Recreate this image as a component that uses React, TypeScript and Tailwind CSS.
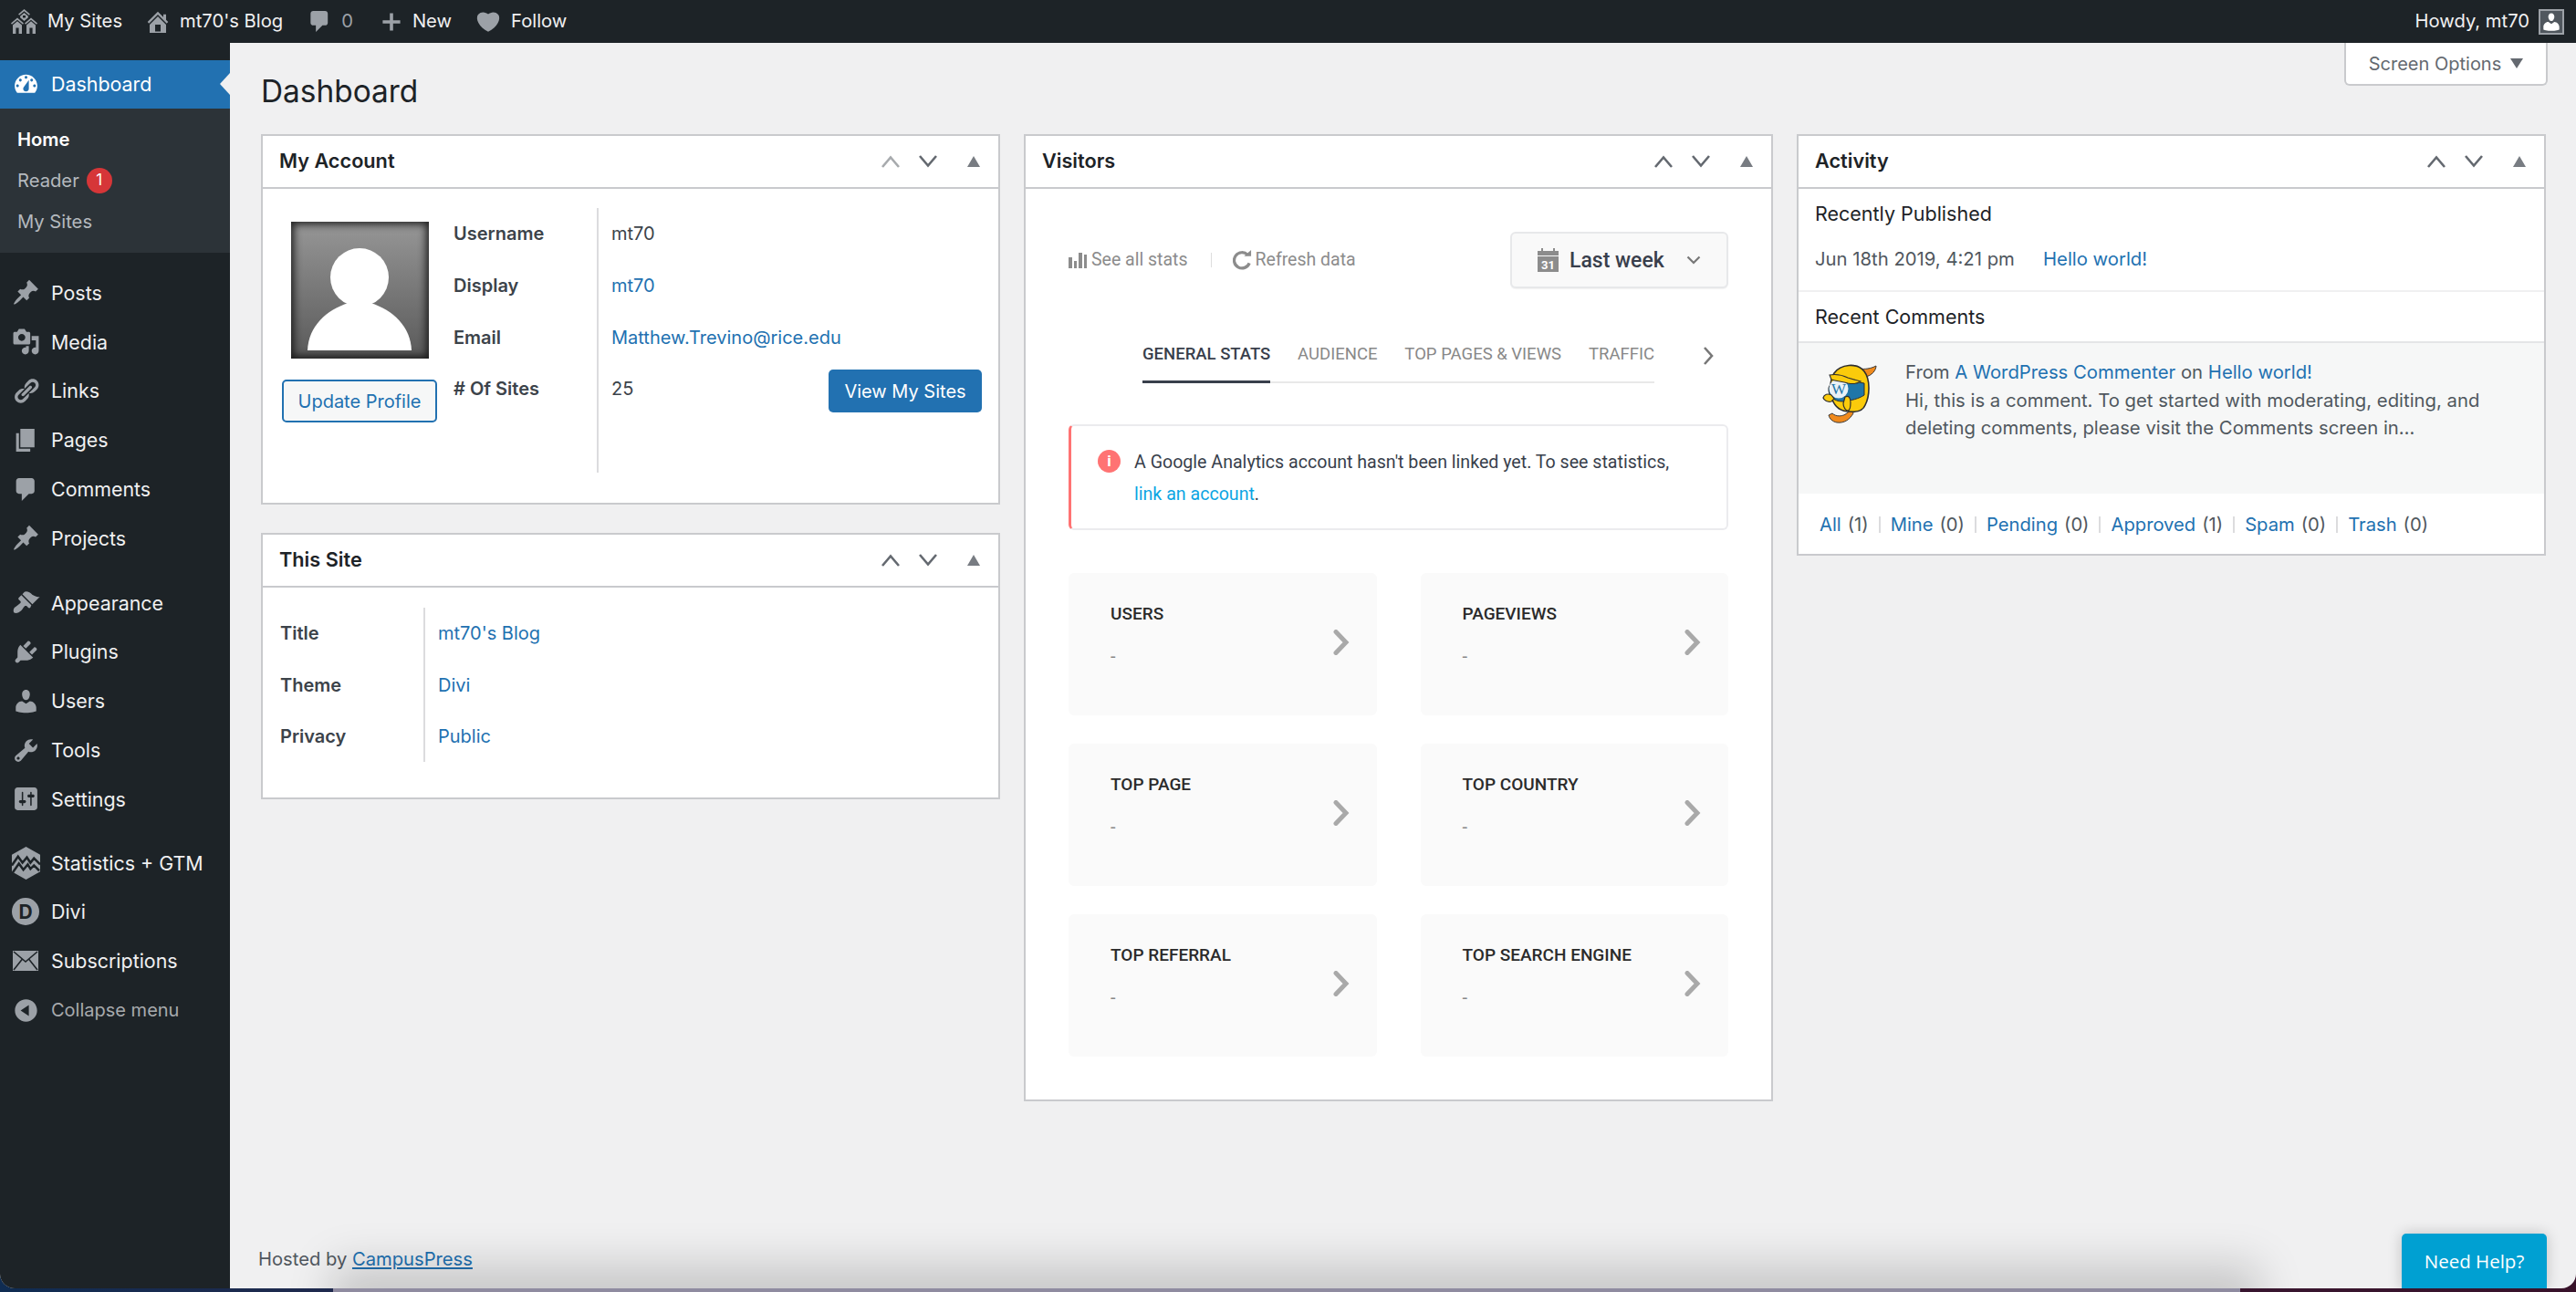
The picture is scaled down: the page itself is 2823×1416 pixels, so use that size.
import React from "react";

const D: Record<string, string> = {
  dashboard:
    "M3.76 16h12.48c1.1-1.37 1.76-3.11 1.76-5 0-4.42-3.58-8-8-8s-8 3.58-8 8c0 1.89.66 3.63 1.76 5zM10 4c.55 0 1 .45 1 1s-.45 1-1 1-1-.45-1-1 .45-1 1-1zM6 6c.55 0 1 .45 1 1s-.45 1-1 1-1-.45-1-1 .45-1 1-1zm8 0c.55 0 1 .45 1 1s-.45 1-1 1-1-.45-1-1 .45-1 1-1zm-5.37 5.55L12 7v6c0 1.1-.9 2-2 2s-2-.9-2-2c0-.57.24-1.08.63-1.45zM4 10c.55 0 1 .45 1 1s-.45 1-1 1-1-.45-1-1 .45-1 1-1zm12 0c.55 0 1 .45 1 1s-.45 1-1 1-1-.45-1-1 .45-1 1-1z",
  post: "M10.44 3.02l1.82-1.82 6.36 6.35-1.83 1.82c-1.05-.68-2.48-.57-3.41.36l-.75.75c-.92.93-1.04 2.35-.35 3.41l-1.83 1.82-2.41-2.41-2.8 2.79c-.42.42-3.38 2.71-3.8 2.29s1.86-3.39 2.28-3.81l2.79-2.79L4.1 9.36l1.83-1.82c1.05.69 2.48.57 3.4-.36l.75-.75c.93-.92 1.05-2.35.36-3.41z",
  media:
    "M13 11V4c0-.55-.45-1-1-1h-1.67L9 1H5L3.67 3H2c-.55 0-1 .45-1 1v7c0 .55.45 1 1 1h10c.55 0 1-.45 1-1zM7 4.5c1.38 0 2.5 1.12 2.5 2.5S8.38 9.5 7 9.5 4.5 8.38 4.5 7 5.62 4.5 7 4.5zM14 6h5v10.5c0 1.38-1.12 2.5-2.5 2.5S14 17.88 14 16.5s1.12-2.5 2.5-2.5c.17 0 .34.02.5.05V9h-3V6zm-4 8.05V13h2v3.5c0 1.38-1.12 2.5-2.5 2.5S7 17.88 7 16.5 8.12 14 9.5 14c.17 0 .34.02.5.05z",
  links:
    "M17.74 2.76c1.68 1.69 1.68 4.41 0 6.1l-1.53 1.52c-1.12 1.12-2.7 1.47-4.14 1.09l2.62-2.61.76-.77.76-.76c.84-.84.84-2.2 0-3.04-.84-.85-2.2-.85-3.04 0l-.77.76-3.38 3.38c-.37-1.44-.02-3.02 1.1-4.14l1.52-1.53c1.69-1.68 4.42-1.68 6.1 0zM8.59 13.43l5.34-5.34c.42-.42.42-1.1 0-1.52-.44-.43-1.13-.39-1.53 0l-5.33 5.34c-.42.42-.42 1.1 0 1.52.44.43 1.13.39 1.52 0zm-.76 2.29l4.14-4.15c.38 1.44.03 3.02-1.09 4.14l-1.52 1.53c-1.69 1.68-4.41 1.68-6.1 0-1.68-1.68-1.68-4.42 0-6.1l1.53-1.52c1.12-1.12 2.7-1.47 4.14-1.1l-4.14 4.15c-.85.84-.85 2.2 0 3.05.84.84 2.2.84 3.04 0z",
  page: "M6 15V2h10v13H6zm-1 1h8v2H3V5h2v11z",
  comments: "M5 2h9c1.1 0 2 .9 2 2v7c0 1.1-.9 2-2 2h-2l-5 5v-5H5c-1.1 0-2-.9-2-2V4c0-1.1.9-2 2-2z",
  appearance:
    "M14.48 11.06L7.41 3.99l1.5-1.5c.5-.56 2.3-.47 3.51.32 1.21.8 1.43 1.28 2.91 2.1 1.18.64 2.45 1.26 4.45.85zm-.71.71L6.7 4.7 4.93 6.47c-.39.39-.39 1.02 0 1.41l1.06 1.06c.39.39.39 1.03 0 1.42-.6.6-1.43 1.11-2.21 1.69-.35.26-.7.53-1.01.84C1.43 13.23.91 15 1.2 16.5c.08.41.36.69.77.77 1.5.29 3.27-.23 4.61-1.57.31-.31.58-.66.84-1.01.58-.78 1.09-1.61 1.69-2.21.39-.39 1.03-.39 1.42 0l1.06 1.06c.39.39 1.02.39 1.41 0z",
  plugins:
    "M13.11 4.36L9.87 7.6 8 5.73l3.24-3.24c.35-.34 1.05-.2 1.56.32.52.51.66 1.21.31 1.55zm-8 1.77l.91-1.12 9.01 9.01-1.19.84c-.71.71-2.63 1.16-3.82 1.16H6.14L4.9 17.26c-.59.59-1.54.59-2.12 0-.59-.58-.59-1.53 0-2.12l1.24-1.24v-3.88c0-1.13.4-3.19 1.09-3.89zm7.26 3.97l3.24-3.24c.34-.35 1.04-.21 1.55.31.52.51.66 1.21.31 1.55l-3.24 3.25z",
  users:
    "M10 9.25c-2.27 0-2.73-3.44-2.73-3.44C7 4.02 7.82 2 9.97 2c2.16 0 2.98 2.02 2.71 3.81 0 0-.41 3.44-2.68 3.44zm0 2.57L12.72 10c2.39 0 4.52 2.33 4.52 4.53v2.49s-3.65 1.13-7.24 1.13c-3.65 0-7.24-1.13-7.24-1.13v-2.49c0-2.25 1.94-4.48 4.47-4.48z",
  tools:
    "M16.68 9.77c-1.34 1.34-3.3 1.67-4.95.99l-5.41 6.52c-.99.99-2.59.99-3.58 0s-.99-2.59 0-3.57l6.52-5.42c-.68-1.65-.35-3.61.99-4.95 1.28-1.28 3.12-1.62 4.72-1.06l-2.89 2.89 2.82 2.82 2.86-2.87c.53 1.58.18 3.39-1.08 4.65zM3.81 16.21c.4.39 1.04.39 1.43 0 .4-.4.4-1.04 0-1.43-.39-.4-1.03-.4-1.43 0-.39.39-.39 1.03 0 1.43z",
  settings:
    "M18 16V4c0-1.1-.9-2-2-2H4c-1.1 0-2 .9-2 2v12c0 1.1.9 2 2 2h12c1.1 0 2-.9 2-2zM8 11h1c.55 0 1 .45 1 1s-.45 1-1 1H8v1.5c0 .28-.22.5-.5.5s-.5-.22-.5-.5V13H6c-.55 0-1-.45-1-1s.45-1 1-1h1V5.5c0-.28.22-.5.5-.5s.5.22.5.5V11zm5-2h-1c-.55 0-1-.45-1-1s.45-1 1-1h1V5.5c0-.28.22-.5.5-.5s.5.22.5.5V7h1c.55 0 1 .45 1 1s-.45 1-1 1h-1v5.5c0 .28-.22.5-.5.5s-.5-.22-.5-.5V9z",
  collapse: "M10 2.16c4.33 0 7.84 3.51 7.84 7.84s-3.51 7.84-7.84 7.84S2.16 14.33 2.16 10 5.71 2.16 10 2.16zm2 11.72V6.12L6.18 9.97z",
  home: "M16 8.5l1.53 1.53-1.06 1.06L10 4.62l-6.47 6.47-1.06-1.06L10 2.5l4 4v-2h2v4zm-6-2.46l6 5.99V18H4v-5.97zM12 17v-5H8v5h4z",
  heart:
    "M10 17.12c3.33-1.4 5.74-3.79 7.04-6.21 1.28-2.41 1.46-4.81.32-6.25-1.03-1.29-2.37-1.78-3.73-1.74s-2.68.63-3.63 1.46c-.95-.83-2.27-1.42-3.63-1.46s-2.7.45-3.73 1.74c-1.14 1.44-.96 3.84.34 6.25 1.28 2.42 3.69 4.81 7.02 6.21z",
  plus: "M8.5 2h3v6.5H18v3h-6.5V18h-3v-6.5H2v-3h6.5z",
};

function Dash({ name, size = 31, color = "#9ca1a7" }: { name: string; size?: number; color?: string }) {
  return (
    <svg viewBox="0 0 20 20" width={size} height={size} fill={color} fillRule="evenodd" className="shrink-0">
      <path d={D[name]} />
    </svg>
  );
}

function MailIcon() {
  return (
    <svg viewBox="0 0 28 22" width={28} height={22} className="shrink-0">
      <rect width="28" height="22" fill="#9ca1a7" />
      <path d="M1 1l13 11L27 1M1 21l9.5-12M27 21L17.5 9" fill="none" stroke="#1d2327" strokeWidth="1.6" />
    </svg>
  );
}

function MySitesIcon() {
  return (
    <svg viewBox="0 0 31 27" width={31} height={27} fill="#9ca1a7" className="shrink-0">
      <path d="M15.5 0l6.4 5.6-1 1.2-5.4-4.6-5.4 4.6-1-1.2z" />
      <path d="M15.5 4l4.4 3.7v1.6l-4.4 3.6-4.4-3.6V7.7zM14 7h3v2.6h-3z" fillRule="evenodd" />
      <path d="M8 9.6l7 6-1 1.2-6-5-6 5-1-1.2z" />
      <path d="M8 13.2l5 4.2V27H3v-9.6zM6.4 20.5V27h3.2v-6.5z" fillRule="evenodd" />
      <path d="M23 9.6l7 6-1 1.2-6-5-6 5-1-1.2z" />
      <path d="M23 13.2l5 4.2V27H18v-9.6zM21.4 20.5V27h3.2v-6.5z" fillRule="evenodd" />
    </svg>
  );
}

function StatsLogo() {
  return (
    <svg viewBox="0 0 34 37" width={33} height={36} className="shrink-0">
      <path d="M17 0l16 9v19l-16 9-16-9V9z" fill="#9ca1a7" />
      <path d="M1 21l7-10 5 7 5-6 4 6 4-5 7 7M2 29l7-10 5 7 5-6 3 5 4-4 6 6" fill="none" stroke="#1d2327" strokeWidth="2.6" />
    </svg>
  );
}

function Wapuu() {
  return (
    <svg viewBox="12 8 62 68" width={62} height={68} className="shrink-0">
      <path d="M24 64c4 4 12 4 17-1l5-3 1 4c-4 7-10 11-18 10-5-1-8-4-9-8z" fill="#f08a1d" stroke="#3a3a3a" strokeWidth="1" />
      <path d="M54 15c6 1 12 0 18-3 0 5-5 11-12 12z" fill="#f08a1d" stroke="#3a3a3a" strokeWidth="1" />
      <path d="M26 20c7-10 25-12 33-2 7 9 6 27 1 37-2 5-8 8-17 7-10 0-16-5-19-13-3-9-3-21 2-29z" fill="#fbcb0b" stroke="#2e2e2e" strokeWidth="1.6" />
      <path d="M20 36c2-6 8-9 16-8 8 0 16 2 23 3l0 13c-6 4-14 6-24 7-9 0-16-6-15-15z" fill="#1f76a8" stroke="#2e2e2e" strokeWidth="1" />
      <circle cx="31" cy="37" r="10.5" fill="#e9f1f6" />
      <text x="31" y="43" textAnchor="middle" fontFamily="Liberation Serif" fontSize="17" fill="#1f76a8">W</text>
      <path d="M21 22c6-1 14 0 20 3l14 4c-4 3-9 3-14 2-6-2-12-2-18-4z" fill="#fbcb0b" stroke="#2e2e2e" strokeWidth="1.1" />
      <path d="M14 47c1-4 5-5 9-3l3 4-3 3c-4 1-8-1-9-4zM38 46c4-2 6 1 6 6s-1 9-3 9-5-3-5-8z" fill="#fbcb0b" stroke="#2e2e2e" strokeWidth="1.2" />
    </svg>
  );
}

function ChevUp({ color = "#787c82" }: { color?: string }) {
  return (
    <svg viewBox="0 0 22 14" width={22} height={14}>
      <path d="M2 13L11 2.5 20 13" fill="none" stroke={color} strokeWidth="2.6" />
    </svg>
  );
}
function ChevDown() {
  return (
    <svg viewBox="0 0 22 14" width={22} height={14}>
      <path d="M2 1L11 11.5 20 1" fill="none" stroke="#646970" strokeWidth="2.6" />
    </svg>
  );
}

function Card({ title, upLight, children }: { title: string; upLight?: boolean; children: React.ReactNode }) {
  return (
    <section className="border-2 border-[#c9cacd] bg-white">
      <header className="flex h-[58px] items-center border-b-2 border-[#c9cacd] pl-[18px] pr-[20px]">
        <h2 className="flex-1 -translate-y-[1px] text-[21.7px] font-semibold text-[#1d2327]">{title}</h2>
        <ChevUp color={upLight ? "#a7aaad" : "#646970"} />
        <div className="ml-[19px]"><ChevDown /></div>
        <div className="ml-[32px] h-0 w-0 border-x-[7px] border-b-[12px] border-x-transparent border-b-[#787c82]" />
      </header>
      {children}
    </section>
  );
}

const Lnk = ({ children }: { children: React.ReactNode }) => <a className="text-[#2271b1]">{children}</a>;

function SideRow({ icon, label, muted }: { icon: React.ReactNode; label: string; muted?: boolean }) {
  return (
    <div className={`flex h-[53.8px] items-center ${muted ? "text-[20px] text-[#a7aaad]" : "text-[21.4px] text-[#f0f0f1]"}`}>
      <div className="flex w-[56px] justify-center">{icon}</div>
      <span>{label}</span>
    </div>
  );
}

function Sidebar() {
  return (
    <aside className="w-[252px] shrink-0 bg-[#1d2327] pt-[19px]">
      <div className="relative flex h-[53px] items-center bg-[#2271b1] text-[21.4px] text-white">
        <div className="flex w-[56px] justify-center"><Dash name="dashboard" color="#ffffff" /></div>
        <span>Dashboard</span>
        <div className="absolute right-0 top-[14px] h-0 w-0 border-y-[12px] border-r-[11px] border-y-transparent border-r-[#f0f0f1]" />
      </div>
      <div className="h-[158px] bg-[#2c3338] pl-[19px] pt-[12px] text-[20.2px] text-[#b4b9be]">
        <div className="flex h-[44.5px] items-center font-semibold text-white">Home</div>
        <div className="flex h-[44.5px] items-center gap-[8px]">
          Reader
          <span className="flex h-[28px] w-[28px] items-center justify-center rounded-full bg-[#d63638] text-[17px] text-white">1</span>
        </div>
        <div className="flex h-[46px] items-center">My Sites</div>
      </div>
      <div className="mt-[17px]">
        <SideRow icon={<Dash name="post" />} label="Posts" />
        <SideRow icon={<Dash name="media" />} label="Media" />
        <SideRow icon={<Dash name="links" />} label="Links" />
        <SideRow icon={<Dash name="page" />} label="Pages" />
        <SideRow icon={<Dash name="comments" />} label="Comments" />
        <SideRow icon={<Dash name="post" />} label="Projects" />
      </div>
      <div className="mt-[17px]">
        <SideRow icon={<Dash name="appearance" />} label="Appearance" />
        <SideRow icon={<Dash name="plugins" />} label="Plugins" />
        <SideRow icon={<Dash name="users" />} label="Users" />
        <SideRow icon={<Dash name="tools" />} label="Tools" />
        <SideRow icon={<Dash name="settings" />} label="Settings" />
      </div>
      <div className="mt-[16px]">
        <SideRow icon={<StatsLogo />} label="Statistics + GTM" />
        <SideRow
          icon={
            <span className="flex h-[30px] w-[30px] items-center justify-center rounded-full bg-[#9ca1a7] text-[21px] font-bold text-[#1d2327]">D</span>
          }
          label="Divi"
        />
        <SideRow icon={<MailIcon />} label="Subscriptions" />
        <SideRow icon={<Dash name="collapse" />} label="Collapse menu" muted />
      </div>
    </aside>
  );
}

function TopBar() {
  return (
    <div className="flex h-[47px] shrink-0 items-center bg-[#1d2327] pl-[11px] pr-[13px] text-[20.2px] text-[#f0f0f1]">
      <MySitesIcon />
      <span className="ml-[10px]">My Sites</span>
      <span className="ml-[24px]"><Dash name="home" size={30} /></span>
      <span className="ml-[9px]">mt70's Blog</span>
      <span className="ml-[26px]"><Dash name="comments" size={29} /></span>
      <span className="ml-[9px] text-[#9ca1a7]">0</span>
      <span className="ml-[30px]"><Dash name="plus" size={24} /></span>
      <span className="ml-[11px]">New</span>
      <span className="ml-[25px]"><Dash name="heart" size={30} /></span>
      <span className="ml-[10px]">Follow</span>
      <span className="ml-auto">Howdy, mt70</span>
      <span className="ml-[10px] flex h-[28px] w-[28px] items-end justify-center overflow-hidden border-2 border-[#9ca1a7] bg-[#50575e]">
        <Dash name="users" size={24} color="#ffffff" />
      </span>
    </div>
  );
}

function Avatar() {
  return (
    <div className="flex h-[150px] w-[151px] items-end justify-center bg-gradient-to-b from-[#979797] to-[#5a5a5a] pb-[9px] shadow-[inset_0_0_8px_3px_rgba(20,20,20,0.9)]">
      <svg viewBox="0 0 114 112" width={114} height={112}>
        <ellipse cx="57" cy="32" rx="32" ry="32" fill="#ffffff" />
        <path d="M0 112C1 86 20 68 45 60h24c25 8 44 26 45 52z" fill="#ffffff" />
      </svg>
    </div>
  );
}

function InfoRows({ rows, rowH, last }: { rows: [string, React.ReactNode][]; rowH: string; last?: React.ReactNode }) {
  return (
    <div className="flex-1">
      {rows.map(([k, v]) => (
        <div key={k} className={`flex items-center ${rowH}`}>
          <b className="w-[157px] font-semibold text-[#3c434a]">{k}</b>
          <div className="flex-1 pl-[16px]">{v}</div>
        </div>
      ))}
      {last}
    </div>
  );
}

function MyAccount() {
  return (
    <Card title="My Account" upLight>
      <div className="flex h-[344px] text-[20px] text-[#3c434a]">
        <div className="flex w-[212px] flex-col items-center pt-[36px]">
          <Avatar />
          <button className="mt-[23px] h-[47px] w-[170px] rounded-[5px] border-2 border-[#2271b1] bg-[#f6f7f7] text-[20px] text-[#2271b1]">Update Profile</button>
        </div>
        <div className="relative -ml-[3px] mt-[21px] h-[290px] flex-1">
          <div className="absolute bottom-0 left-[157px] top-0 w-[2px] bg-[#dcdcde]" />
          <InfoRows
            rowH="h-[56.7px]"
            rows={[
              ["Username", "mt70"],
              ["Display", <Lnk>mt70</Lnk>],
              ["Email", <Lnk>Matthew.Trevino@rice.edu</Lnk>],
            ]}
            last={
              <div className="flex h-[56.7px] items-center">
                <b className="w-[157px] font-semibold">#&nbsp;Of Sites</b>
                <div className="flex-1 pl-[16px]">25</div>
                <button className="mr-[18px] mt-[5px] h-[47px] w-[168px] rounded-[5px] bg-[#2271b1] text-[20px] text-white">View My Sites</button>
              </div>
            }
          />
        </div>
      </div>
    </Card>
  );
}

function ThisSite() {
  return (
    <Card title="This Site">
      <div className="h-[230px] pl-[19px] pt-[22px] text-[20px]">
        <div className="relative h-[169px]">
          <div className="absolute bottom-0 left-[157px] top-0 w-[2px] bg-[#dcdcde]" />
          <InfoRows
            rowH="h-[56.5px]"
            rows={[
              ["Title", <Lnk>mt70's Blog</Lnk>],
              ["Theme", <Lnk>Divi</Lnk>],
              ["Privacy", <Lnk>Public</Lnk>],
            ]}
          />
        </div>
      </div>
    </Card>
  );
}

function Stat({ title }: { title: string }) {
  return (
    <div className="relative h-[156px] rounded-[6px] bg-[#fafafa] pl-[46px] pt-[34px]">
      <div className="text-[19px] font-medium leading-[22px] text-[#2b2b2b]">{title}</div>
      <div className="mt-[23px] text-[20px] leading-[24px] text-[#888888]">-</div>
      <svg viewBox="0 0 20 28" width={20} height={28} className="absolute right-[29px] top-[62px]">
        <path d="M4 2.5L15 14 4 25.5" fill="none" stroke="#a9a9a9" strokeWidth="5" strokeLinecap="round" />
      </svg>
    </div>
  );
}

function Visitors() {
  return (
    <Card title="Visitors">
      <div className="px-[47px] pb-[47px] pt-[47px] [font-family:Roboto,sans-serif]">
        <div className="flex h-[62px] items-center text-[19.5px] text-[#8c8c8c]">
          <svg viewBox="0 0 21 20" width={21} height={20} fill="#8c8c8c" className="shrink-0">
            <path d="M0 7h4v12H0zM6 11h3v8H6zM11 2h4v17h-4zM17 4h3v15h-3z" />
          </svg>
          <span className="ml-[4px]">See all stats</span>
          <div className="ml-[25px] h-[16px] w-[1px] bg-[#dddddd]" />
          <svg viewBox="0 0 22 24" width={21} height={23} className="ml-[23px] shrink-0">
            <path d="M17 5.5A9 9 0 1 0 19 15" fill="none" stroke="#8c8c8c" strokeWidth="3.4" />
            <path d="M13 7h8V0z" fill="#8c8c8c" />
          </svg>
          <span className="ml-[4px]">Refresh data</span>
          <div className="ml-auto flex h-[62px] w-[239px] items-center rounded-[6px] border-2 border-[#e7e8ea] bg-[#f9f9f9] pl-[28px] shadow-[0_1px_1px_rgba(0,0,0,0.05)]">
            <svg viewBox="0 0 23 26" width={23} height={26} className="shrink-0">
              <path d="M0 3h4V0h2v3h11V0h2v3h4v5H0z" fill="#8c8c8c" />
              <rect y="9" width="23" height="17" fill="#8c8c8c" />
              <text x="11.5" y="22.5" textAnchor="middle" fontSize="13" fontWeight="700" fontFamily="Roboto" fill="#ffffff">31</text>
            </svg>
            <span className="ml-[12px] text-[23px] font-medium leading-none text-[#393f4c]">Last week</span>
            <svg viewBox="0 0 16 10" width={16} height={10} className="ml-[24px]">
              <path d="M1.5 1.5L8 8l6.5-6.5" fill="none" stroke="#777777" strokeWidth="2.2" />
            </svg>
          </div>
        </div>
        <div className="ml-[81px] mt-[44px] flex items-center">
          <div className="flex w-[561px] justify-between border-b-2 border-[#e8e8e8] text-[18.5px] text-[#888888]">
            <span className="-mb-[2px] flex h-[60px] items-center border-b-[3px] border-[#393f4c] font-medium text-[#393f4c]">GENERAL STATS</span>
            <span className="flex h-[58px] items-center">AUDIENCE</span>
            <span className="flex h-[58px] items-center">TOP PAGES &amp; VIEWS</span>
            <span className="flex h-[58px] items-center">TRAFFIC</span>
          </div>
          <svg viewBox="0 0 12 22" width={12} height={22} className="ml-[53px]">
            <path d="M2 2l8 9-8 9" fill="none" stroke="#777777" strokeWidth="2.6" />
          </svg>
        </div>
        <div className="mt-[45px] flex h-[116px] rounded-[6px] border-2 border-l-[3px] border-[#ebebee] border-l-[#ff7373] pl-[29px] pt-[22px]">
          <span className="mt-[4px] flex h-[25px] w-[25px] shrink-0 items-center justify-center rounded-full bg-[#ff7373] text-[17px] font-bold leading-none text-white">i</span>
          <p className="ml-[15px] text-[19.6px] leading-[35px] text-[#393f4c]">
            A Google Analytics account hasn't been linked yet. To see statistics,
            <br />
            <a className="text-[#0ca5e3]">link an account</a>.
          </p>
        </div>
        <div className="mt-[47px] grid grid-cols-2 gap-x-[48px] gap-y-[31px]">
          {["USERS", "PAGEVIEWS", "TOP PAGE", "TOP COUNTRY", "TOP REFERRAL", "TOP SEARCH ENGINE"].map((t) => (
            <Stat key={t} title={t} />
          ))}
        </div>
      </div>
    </Card>
  );
}

function Activity() {
  const counts: [string, string][] = [
    ["All", "(1)"],
    ["Mine", "(0)"],
    ["Pending", "(0)"],
    ["Approved", "(1)"],
    ["Spam", "(0)"],
    ["Trash", "(0)"],
  ];
  return (
    <Card title="Activity">
      <div className="h-[113px] border-b-2 border-[#f0f0f1] pl-[18px] text-[20.3px]">
        <h3 className="pt-[12px] text-[21.5px] leading-[30px] text-[#1d2327]">Recently Published</h3>
        <div className="mt-[20px] flex leading-[30px] text-[#50575e]">
          <span className="w-[250px]">Jun 18th 2019, 4:21 pm</span>
          <Lnk>Hello world!</Lnk>
        </div>
      </div>
      <div className="flex h-[56px] items-center border-b-2 border-[#e4e5e7] pl-[18px] text-[21.5px] text-[#1d2327]">Recent Comments</div>
      <div className="flex h-[165px] bg-[#f6f7f7] pl-[25px] pt-[21px] text-[20.3px] leading-[30.5px] text-[#50575e]">
        <Wapuu />
        <div className="-mt-[4px] ml-[30px]">
          <div>
            From <Lnk>A WordPress Commenter</Lnk> on <Lnk>Hello world!</Lnk>
          </div>
          <div>Hi, this is a comment. To get started with moderating, editing, and</div>
          <div>deleting comments, please visit the Comments screen in…</div>
        </div>
      </div>
      <div className="flex h-[66px] items-center pl-[23px] pt-[2px] text-[20.2px] text-[#50575e]">
        {counts.map(([k, v], i) => (
          <React.Fragment key={k}>
            {i > 0 && <span className="mx-[11px] h-[18px] w-[2px] bg-[#dcdcde]" />}
            <Lnk>{k}</Lnk>
            <span className="ml-[7px]">{v}</span>
          </React.Fragment>
        ))}
      </div>
    </Card>
  );
}

export default function App() {
  return (
    <div className="relative h-[1416px] w-[2823px] overflow-hidden bg-gradient-to-r from-[#0f2c52] via-[#3a2040] to-[#38122a] [font-family:Inter,'Liberation_Sans',sans-serif]">
      <div className="absolute bottom-0 left-[365px] h-[4px] w-[2090px] bg-[#8f8ba0]" />
      <div className="relative flex h-[1412px] flex-col overflow-hidden rounded-b-[16px] bg-[#f0f0f1]">
        <TopBar />
        <div className="flex min-h-0 flex-1">
          <Sidebar />
          <main className="flex min-w-0 flex-1 flex-col pl-[34px] pr-[31px]">
            <div className="flex h-[100px] shrink-0 items-start justify-between">
              <h1 className="pt-[30px] text-[33.4px] leading-[46px] text-[#1d2327]">Dashboard</h1>
              <button className="flex h-[47px] w-[223px] items-center justify-center gap-[10px] rounded-b-[6px] border-x-2 border-b-2 border-[#c9cacd] bg-white text-[20px] text-[#646970]">
                Screen Options
                <span className="h-0 w-0 border-x-[7px] border-t-[11px] border-x-transparent border-t-[#646970]" />
              </button>
            </div>
            <div className="flex items-start gap-[26px]">
              <div className="flex w-[810px] flex-col gap-[31px]">
                <MyAccount />
                <ThisSite />
              </div>
              <div className="w-[821px]"><Visitors /></div>
              <div className="w-[821px]"><Activity /></div>
            </div>
            <footer className="-ml-[3px] mt-auto pb-[17px] text-[20.2px] leading-[30px] text-[#50575e]">
              Hosted by <a className="text-[#2271b1] underline">CampusPress</a>
            </footer>
          </main>
        </div>
        <div className="absolute -bottom-[30px] left-[390px] h-[30px] w-[2060px] shadow-[0_0_48px_26px_rgba(0,0,0,0.17)]" />
        <div className="absolute bottom-0 right-[32px] flex h-[60px] w-[159px] items-center justify-center rounded-t-[5px] bg-[#00a0d2] text-[20.5px] text-white shadow-[0_0_16px_rgba(0,0,0,0.2)] [font-family:'Open_Sans',sans-serif]">
          Need Help?
        </div>
      </div>
    </div>
  );
}
